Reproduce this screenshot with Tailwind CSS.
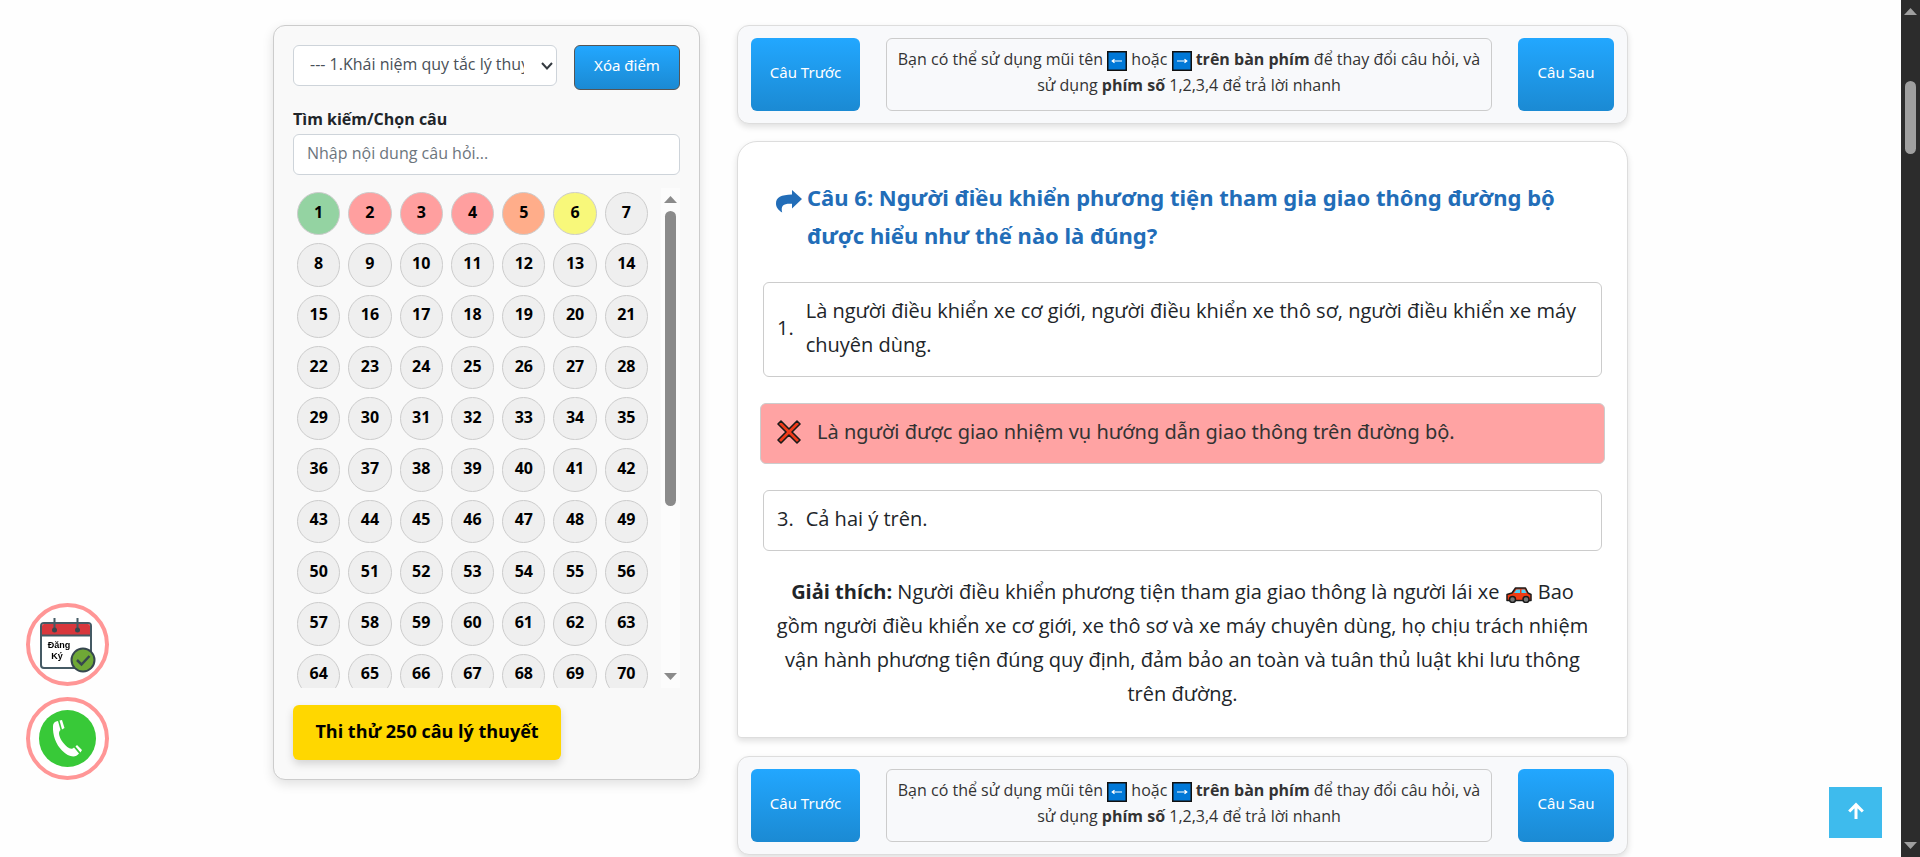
<!DOCTYPE html>
<html lang="vi">
<head>
<meta charset="utf-8">
<meta name="viewport" content="width=device-width, initial-scale=1">
<title>Ôn thi 250 câu lý thuyết</title>
<script src="https://cdn.jsdelivr.net/npm/@tailwindcss/browser@4"></script>
</head>
<body class="flex h-screen overflow-hidden bg-[#fefefe] font-['Open_Sans','Noto_Sans',sans-serif] text-[16px] text-[#212529]">

<svg class="hidden" aria-hidden="true">
  <symbol id="key-left" viewBox="0 0 20 20">
    <rect x="0.75" y="0.75" width="18.5" height="18.5" fill="#0078d7" stroke="#111" stroke-width="1.5"/>
    <path d="M5.500 10H15M7.500 8.200L5.200 10L7.500 11.800" fill="none" stroke="#fff" stroke-width="1.200"/>
  </symbol>
  <symbol id="key-right" viewBox="0 0 20 20">
    <rect x="0.75" y="0.75" width="18.5" height="18.5" fill="#0078d7" stroke="#111" stroke-width="1.5"/>
    <path d="M5 10H14.500M12.500 8.200L14.800 10L12.500 11.800" fill="none" stroke="#fff" stroke-width="1.200"/>
  </symbol>
</svg>

<main class="min-w-0 flex-1 px-4 pt-[25px]">
  <div class="mx-auto flex max-w-[1355px] items-start gap-[37px]">

    <section class="w-[427px] shrink-0 rounded-xl border border-[#ccc] bg-[#f9f9f9] p-[19px] shadow-[0_4px_12px_rgba(0,0,0,0.12)]">
      <div class="flex items-start gap-[17px]">
        <div class="relative min-w-0 flex-1">
          <select aria-label="Chương" class="h-[41px] w-full appearance-none rounded-md border border-[#ced4da] bg-white pr-8 pb-1 pl-4 text-[#495057]">
            <option>--- 1.Khái niệm quy tắc lý thuyết</option>
          </select>
          <svg class="pointer-events-none absolute top-[15px] right-1 h-3 w-3" viewBox="0 0 12 12" fill="none" stroke="#343a40" stroke-width="2"><path d="M1 3L6 8.500L11 3"/></svg>
        </div>
        <button class="h-[45px] w-[106px] shrink-0 rounded-md border border-[#555] bg-linear-to-b from-[#22a7ff] to-[#1b8ad3] pb-1 font-['Noto_Sans',sans-serif] text-[15px] text-white">Xóa điểm</button>
      </div>

      <label for="search" class="mt-[17px] block leading-6 font-bold">Tìm kiếm/Chọn câu</label>
      <input id="search" type="text" placeholder="Nhập nội dung câu hỏi..." class="mt-[3px] h-[41px] w-full rounded-md border border-[#ced4da] bg-white px-[13px] pb-1 placeholder:text-[#6c757d]">

      <div class="mt-[13px] flex h-[500px] overflow-hidden">
        <div id="numbers" class="grid flex-1 grid-cols-7 content-start gap-2 overflow-hidden pt-1 pr-[13px] pl-1"></div>
        <div class="flex w-[19px] flex-col items-center bg-[#fcfcfc] py-2" aria-hidden="true">
          <svg class="h-[7px] w-[13px]" viewBox="0 0 13 7" fill="#8b8b8b"><path d="M6.500 0L13 7H0z"/></svg>
          <div class="mt-2 h-[295px] w-[11px] rounded-full bg-[#8b8b8b]"></div>
          <svg class="mt-auto h-[7px] w-[13px]" viewBox="0 0 13 7" fill="#8b8b8b"><path d="M6.500 7L13 0H0z"/></svg>
        </div>
      </div>

      <button class="mt-[17px] h-[55px] w-[268px] rounded-md bg-[#ffd700] pb-0.5 text-[18px] font-bold text-black shadow-[0_4px_8px_rgba(0,0,0,0.15)]">Thi thử 250 câu lý thuyết</button>
    </section>

    <div class="min-w-0 flex-1">
      <nav class="flex gap-[26px] rounded-xl border border-[#ddd] bg-[#f8f9fb] px-[13px] py-3 shadow-[0_3px_6px_rgba(0,0,0,0.12)]">
        <button class="w-[109px] rounded-md bg-linear-to-b from-[#22a7ff] to-[#1b8ad3] pb-1 font-['Noto_Sans',sans-serif] text-[15px] text-white">Câu Trước</button>
        <p class="flex-1 rounded-md border border-[#ccc] px-2 pt-[7px] pb-3 text-center leading-[26px] text-[#333]">Bạn có thể sử dụng mũi tên <svg class="inline size-5" role="img" aria-label="trái"><use href="#key-left"/></svg> hoặc <svg class="inline size-5" role="img" aria-label="phải"><use href="#key-right"/></svg> <b>trên bàn phím</b> để thay đổi câu hỏi, và<br>sử dụng <b>phím số</b> 1,2,3,4 để trả lời nhanh</p>
        <button class="w-24 rounded-md bg-linear-to-b from-[#22a7ff] to-[#1b8ad3] pb-1 font-['Noto_Sans',sans-serif] text-[15px] text-white">Câu Sau</button>
      </nav>

      <article class="mt-[17px] rounded-t-[20px] rounded-b-sm border border-[#ddd] bg-white px-[25px] pt-9 pb-[26px] text-[20px] leading-[34px] shadow-[0_3px_6px_rgba(0,0,0,0.12)]">
        <h2 class="flex gap-[5px] px-[13px] font-['Noto_Sans',sans-serif] text-[22px] leading-[38px] font-bold text-[#226db8]">
          <svg class="mt-3 h-[23px] w-[26px] shrink-0" viewBox="0 0 26 23" fill="currentColor"><path d="M16 0L26 9L16 18.500V13.800C8.500 13.300 4.300 14.800 6.200 22.500C1.500 19.500 0 16.500 0 13.500C0 7.500 5 4.800 16 4.600Z"/></svg>
          <span>Câu 6: Người điều khiển phương tiện tham gia giao thông đường bộ<br>được hiểu như thế nào là đúng?</span>
        </h2>
        <div class="mt-7 flex flex-col gap-[26px]">
          <button class="flex items-center gap-3 rounded-md border border-[#ccc] pt-[11px] pr-2 pb-[14px] pl-[13px] text-left"><span>1.</span><span>Là người điều khiển xe cơ giới, người điều khiển xe thô sơ, người điều khiển xe máy chuyên dùng.</span></button>
          <button class="-mx-[3px] flex items-center gap-4 rounded-md border border-[#ccc] bg-[#ffa3a3] px-4 pt-[11px] pb-[14px] text-left font-['Noto_Sans',sans-serif] text-[#333]">
            <svg class="size-6 shrink-0" viewBox="0 0 24 24" fill="#f03a17" stroke="#1a1a1a" stroke-width="1.600" stroke-linejoin="round"><path d="M4 1L12 9L20 1L23 4L15 12L23 20L20 23L12 15L4 23L1 20L9 12L1 4Z"/></svg>
            <span>Là người được giao nhiệm vụ hướng dẫn giao thông trên đường bộ.</span></button>
          <button class="flex items-center gap-3 rounded-md border border-[#ccc] pt-[11px] pr-2 pb-[14px] pl-[13px] text-left"><span>3.</span><span>Cả hai ý trên.</span></button>
        </div>
        <p class="mt-6 text-center"><b>Giải thích:</b> Người điều khiển phương tiện tham gia giao thông là người lái xe <svg class="mx-px inline h-4 w-[26px] align-[-4px]" viewBox="0 0 26 16" role="img" aria-label="ô tô"><path d="M1 7.500L6 6L9.500 1H19.500L22 6L25 7.500V13.500H1Z" fill="#ef3c14" stroke="#1a1a1a" stroke-width="1.500" stroke-linejoin="round"/><path d="M8 6L10.500 2.500H14V6ZM15.500 2.500H18.700L20.500 6H15.500Z" fill="#4fd0f5"/><circle cx="6.500" cy="12.500" r="3" fill="#777" stroke="#1a1a1a" stroke-width="1.500"/><circle cx="20" cy="12.500" r="3" fill="#777" stroke="#1a1a1a" stroke-width="1.500"/></svg> Bao<br>gồm người điều khiển xe cơ giới, xe thô sơ và xe máy chuyên dùng, họ chịu trách nhiệm<br>vận hành phương tiện đúng quy định, đảm bảo an toàn và tuân thủ luật khi lưu thông<br>trên đường.</p>
      </article>

      <nav class="mt-[18px] flex gap-[26px] rounded-xl border border-[#ddd] bg-[#f8f9fb] px-[13px] py-3 shadow-[0_3px_6px_rgba(0,0,0,0.12)]">
        <button class="w-[109px] rounded-md bg-linear-to-b from-[#22a7ff] to-[#1b8ad3] pb-1 font-['Noto_Sans',sans-serif] text-[15px] text-white">Câu Trước</button>
        <p class="flex-1 rounded-md border border-[#ccc] px-2 pt-[7px] pb-3 text-center leading-[26px] text-[#333]">Bạn có thể sử dụng mũi tên <svg class="inline size-5" role="img" aria-label="trái"><use href="#key-left"/></svg> hoặc <svg class="inline size-5" role="img" aria-label="phải"><use href="#key-right"/></svg> <b>trên bàn phím</b> để thay đổi câu hỏi, và<br>sử dụng <b>phím số</b> 1,2,3,4 để trả lời nhanh</p>
        <button class="w-24 rounded-md bg-linear-to-b from-[#22a7ff] to-[#1b8ad3] pb-1 font-['Noto_Sans',sans-serif] text-[15px] text-white">Câu Sau</button>
      </nav>
    </div>
  </div>
</main>

<div class="flex w-[19px] shrink-0 flex-col items-center bg-[#2c2c2c] py-2" aria-hidden="true">
  <svg class="h-[7px] w-[13px]" viewBox="0 0 13 7" fill="#9f9f9f"><path d="M6.500 0L13 7H0z"/></svg>
  <div class="mt-[66px] h-[73px] w-[11px] rounded-full bg-[#9f9f9f]"></div>
  <svg class="mt-auto h-[7px] w-[13px]" viewBox="0 0 13 7" fill="#9f9f9f"><path d="M6.500 7L13 0H0z"/></svg>
</div>

<div class="fixed bottom-[77px] left-[26px] flex flex-col gap-[11px]">
  <a href="#register" aria-label="Đăng ký" class="flex size-[83px] items-center justify-center rounded-full border-4 border-[#ff9696] bg-white">
    <svg class="h-[56px] w-[56px]" viewBox="0 0 56 56">
      <rect x="1" y="6" width="50" height="45" rx="3" fill="#fff" stroke="#455a64" stroke-width="2"/>
      <path d="M2 18V9Q2 7 4 7H48Q50 7 50 9V18Z" fill="#d8373c"/>
      <path d="M1 18.500H51M14.500 1V12M37.500 1V12" stroke="#455a64" stroke-width="2"/>
      <circle cx="14.500" cy="13" r="2.500" fill="#37474f"/><circle cx="37.500" cy="13" r="2.500" fill="#37474f"/>
      <g font-family="Liberation Sans, Arial, sans-serif" font-weight="700" font-size="9" text-anchor="middle" fill="#000"><text x="19" y="31">Đăng</text><text x="17" y="42">Ký</text></g>
      <circle cx="43" cy="43" r="11.500" fill="#6fa836" stroke="#37474f" stroke-width="2"/>
      <path d="M37 43L41.500 47.500L49.500 39" fill="none" stroke="#37474f" stroke-width="2.500"/>
    </svg>
  </a>
  <a href="tel:" aria-label="Gọi điện" class="flex size-[83px] items-center justify-center rounded-full border-4 border-[#ff9696] bg-white">
    <svg class="size-[57px]" viewBox="0 0 57 57">
      <circle cx="28.500" cy="28.500" r="28.500" fill="#38c938"/>
      <path d="M14 16C14 13 16 11.500 19 11L21.500 20C18.500 22 20.500 28 24 32.500C28 37.500 32 40.500 35 37.500L40 43.500C36 49 29 46.500 23 40.500C17 34.500 13.500 25 14 16ZM20.500 10.500L23 10L25.500 18L23 19.500ZM36.500 36.500L38 35L43 40L41.500 42.500Z" fill="#fff"/>
    </svg>
  </a>
</div>

<a href="#top" aria-label="Lên đầu trang" class="fixed right-[38px] bottom-[19px] flex h-[51px] w-[53px] items-center justify-center bg-[#3ebbed]">
  <svg class="mb-1 h-[17px] w-4" viewBox="0 0 16 17" fill="none" stroke="#fff" stroke-width="3"><path d="M8 17V2.500M1.200 9.500L8 2.700L14.800 9.500"/></svg>
</a>

<script>
  // Builds the question picker; answered questions carry a status colour.
  const status = {1: 'bg-[#94d3a2]', 2: 'bg-[#ff9f9f]', 3: 'bg-[#ff9f9f]', 4: 'bg-[#ff9f9f]', 5: 'bg-[#ffad8a]', 6: 'bg-[#f8f87a]'};
  const box = document.getElementById('numbers');
  for (let i = 1; i <= 70; i++) {
    const b = document.createElement('button');
    b.className = 'aspect-square rounded-full border border-[#ccc] pb-1 font-bold text-black ' + (status[i] || 'bg-[#efefef]');
    b.textContent = i;
    box.append(b);
  }
</script>
</body>
</html>
